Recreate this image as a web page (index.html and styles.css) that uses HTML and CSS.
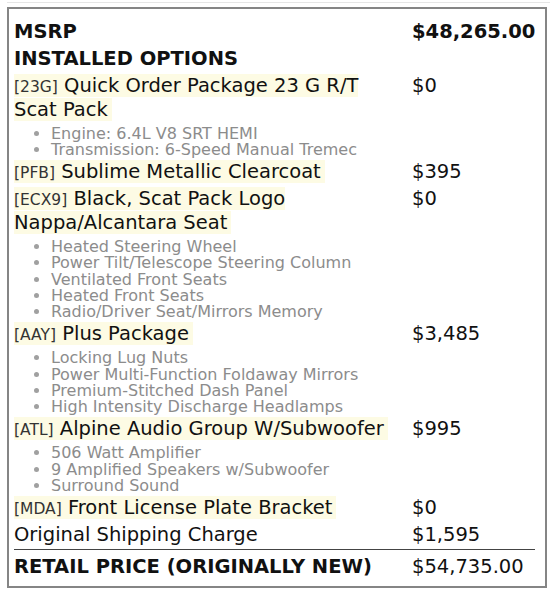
FILE: index.html
```html
<!DOCTYPE html>
<html lang="en">
<head>
<meta charset="utf-8">
<title>Window Sticker</title>
<link rel="stylesheet" href="styles.css">
</head>
<body>
<div class="topline"></div>
<div class="sticker">
  <table class="prices">
    <colgroup><col class="desc-col"><col class="price-col"></colgroup>
    <tbody>
      <tr class="head first">
        <td class="desc">MSRP</td>
        <td class="price">$48,265.00</td>
      </tr>
      <tr class="head">
        <td class="desc" colspan="2">INSTALLED OPTIONS</td>
      </tr>
      <tr>
        <td class="desc"><span class="hl"><span class="code">[23G]</span> Quick Order Package 23 G R/T Scat Pack</span>
          <ul class="features">
            <li>Engine: 6.4L V8 SRT HEMI</li>
            <li>Transmission: 6-Speed Manual Tremec</li>
          </ul>
        </td>
        <td class="price">$0</td>
      </tr>
      <tr>
        <td class="desc"><span class="hl"><span class="code">[PFB]</span> Sublime Metallic Clearcoat</span></td>
        <td class="price">$395</td>
      </tr>
      <tr>
        <td class="desc"><span class="hl"><span class="code">[ECX9]</span> Black, Scat Pack Logo Nappa/Alcantara Seat</span>
          <ul class="features">
            <li>Heated Steering Wheel</li>
            <li>Power Tilt/Telescope Steering Column</li>
            <li>Ventilated Front Seats</li>
            <li>Heated Front Seats</li>
            <li>Radio/Driver Seat/Mirrors Memory</li>
          </ul>
        </td>
        <td class="price">$0</td>
      </tr>
      <tr>
        <td class="desc"><span class="hl"><span class="code">[AAY]</span> Plus Package</span>
          <ul class="features">
            <li>Locking Lug Nuts</li>
            <li>Power Multi-Function Foldaway Mirrors</li>
            <li>Premium-Stitched Dash Panel</li>
            <li>High Intensity Discharge Headlamps</li>
          </ul>
        </td>
        <td class="price">$3,485</td>
      </tr>
      <tr>
        <td class="desc"><span class="hl"><span class="code">[ATL]</span> Alpine Audio Group W/Subwoofer</span>
          <ul class="features">
            <li>506 Watt Amplifier</li>
            <li>9 Amplified Speakers w/Subwoofer</li>
            <li>Surround Sound</li>
          </ul>
        </td>
        <td class="price">$995</td>
      </tr>
      <tr>
        <td class="desc"><span class="hl"><span class="code">[MDA]</span> Front License Plate Bracket</span></td>
        <td class="price">$0</td>
      </tr>
      <tr>
        <td class="desc">Original Shipping Charge</td>
        <td class="price">$1,595</td>
      </tr>
      <tr class="total">
        <td class="desc total-label">RETAIL PRICE (ORIGINALLY NEW)</td>
        <td class="price">$54,735.00</td>
      </tr>
    </tbody>
  </table>
</div>
</body>
</html>
```
FILE: styles.css
```css
body {
  margin: 0;
  background: #ffffff;
  font-family: "DejaVu Sans", "Liberation Sans", sans-serif;
}

.topline {
  margin: 2px 0 0 7px;
  width: 543px;
  height: 1px;
  background: #e6e6e6;
}

.sticker {
  margin: 4px 0 0 7px;
  width: 540px;
  box-sizing: border-box;
  border: 2px solid #858585;
  padding: 9px 10px 7px 5px;
}

.prices {
  width: 100%;
  border-collapse: collapse;
  table-layout: fixed;
}

.desc-col {
  width: 398px;
}

.prices td {
  padding: 1.5px 0;
  vertical-align: top;
  font-size: 19.5px;
  line-height: 24px;
  color: #111111;
}

.prices td.desc {
  padding-right: 12px;
}

.head td {
  font-weight: bold;
}

.hl {
  background: #fdfbe4;
  padding-right: 4px;
}

.code {
  font-size: 15.5px;
  line-height: 1;
  color: #333333;
}

.features {
  margin: 4px 0 -1px;
  padding-left: 37px;
  color: #8c8c8c;
  font-size: 16px;
  line-height: 16.25px;
}

.features li::marker {
  color: #a0a0a0;
}

.total td {
  border-top: 1px solid #444444;
  padding-top: 5px;
  padding-bottom: 0;
}

.total-label {
  font-weight: bold;
}
```
